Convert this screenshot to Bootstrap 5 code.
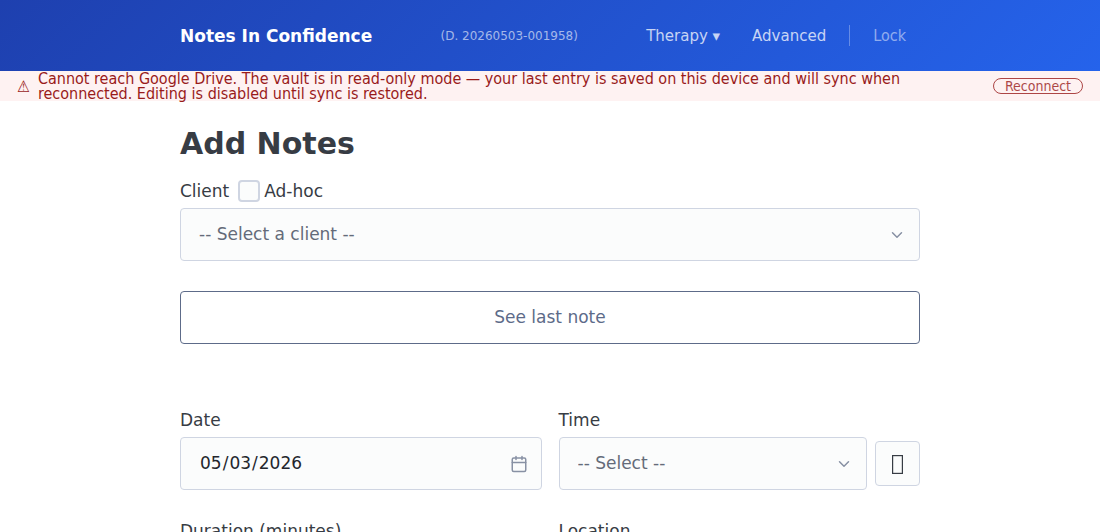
<!DOCTYPE html>
<html lang="en">
<head>
<meta charset="utf-8">
<meta name="viewport" content="width=device-width, initial-scale=1">
<title>Notes In Confidence</title>
<link href="https://cdn.jsdelivr.net/npm/bootstrap@5.3.0/dist/css/bootstrap.min.css" rel="stylesheet">
<style>
  :root { --line: #cfd5e2; --field: #fbfcfc; --ink: #373c44; --slate: #5d6b89; --narrow: "DejaVu Sans Condensed", "DejaVu Sans", sans-serif; }
  body { font-family: "DejaVu Sans", sans-serif; font-size: 17px; line-height: 26px; color: var(--ink); }
  .page-width { max-width: 740px; }
  .topbar { background: linear-gradient(135deg, #1e40af 0%, #2563eb 100%); height: 71px; }
  .topbar a { text-decoration: none; }
  .brand { color: #fff; font-weight: 700; }
  .build { color: rgba(255,255,255,.6); font-size: 12px; }
  .menu { gap: 32px; margin-right: 14px; }
  .menu a { color: rgba(255,255,255,.75); font-size: 15px; }
  .menu .lock-link { color: rgba(255,255,255,.5); font-family: var(--narrow); font-size: 16px; }
  .menu .rule { width: 1px; height: 21px; background: rgba(255,255,255,.3); margin: 0 -9px; }
  .sync-alert { background: #fef2f2; color: #991b1b; font-family: var(--narrow); font-size: 16px; line-height: 15px; padding: 0 17px; }
  .sync-alert p { padding-right: 60px; }
  .reconnect { font-size: 14px; line-height: 14px; padding: 0 11px; color: #991b1b; border: 1px solid #991b1b; border-radius: 8px; background: none; opacity: .8; flex: none; }
  h1 { font-size: 30px; line-height: 37px; font-weight: 700; }
  .form-control, .form-select { height: 53px; padding: 0 18px; font-size: 17px; border: 1px solid var(--line); border-radius: 4px; background-color: var(--field); }
  .form-select { color: #646b79; background-image: url("data:image/svg+xml,%3Csvg xmlns='http://www.w3.org/2000/svg' viewBox='0 0 24 24' fill='none' stroke='%238891a4' stroke-width='2' stroke-linecap='round' stroke-linejoin='round'%3E%3Cpath d='m6 9 6 6 6-6'/%3E%3C/svg%3E"); background-size: 18px; background-position: right 13px center; }
  .form-control { color: #23262c; }
  .form-control::-webkit-datetime-edit-month-field,
  .form-control::-webkit-datetime-edit-day-field,
  .form-control::-webkit-datetime-edit-year-field { padding: 0 1px; }
  .form-control::-webkit-calendar-picker-indicator { width: 18px; height: 18px; padding: 0; margin: 0 -5px 0 0; background: url("data:image/svg+xml,%3Csvg xmlns='http://www.w3.org/2000/svg' viewBox='0 0 24 24' fill='none' stroke='%238891a4' stroke-width='2' stroke-linecap='round' stroke-linejoin='round'%3E%3Crect x='3' y='4' width='18' height='18' rx='2'/%3E%3Cpath d='M16 2v4M8 2v4M3 10h18'/%3E%3C/svg%3E") center / 18px no-repeat; opacity: 1; }
  .form-check-input.adhoc { width: 22px; height: 22px; margin: 0 4px 0 9px; border: 2px solid var(--line); border-radius: 4px; background-color: var(--field); }
  .last-note { height: 53px; border: 1px solid var(--slate); border-radius: 4px; color: var(--slate); font-size: 17px; margin: 30px 0 63px; }
  .now-btn { width: 45px; height: 45px; border: 1px solid var(--line); border-radius: 4px; background: var(--field); color: var(--ink); padding: 0; flex: none; font-size: 17px; }
  .field-grid { --bs-gutter-x: 17px; --bs-gutter-y: 28px; }
  .field-grid label { margin-bottom: 4px; }
</style>
</head>
<body>
<header class="topbar d-flex align-items-center">
  <nav class="container-fluid page-width p-0 d-flex align-items-center justify-content-between">
    <a class="brand" href="#">Notes In Confidence</a>
    <span class="build">(D. 20260503-001958)</span>
    <div class="menu d-flex align-items-center">
      <a href="#">Therapy ▾</a>
      <a href="#">Advanced</a>
      <span class="rule"></span>
      <a class="lock-link" href="#">Lock</a>
    </div>
  </nav>
</header>
<div class="sync-alert d-flex align-items-center" role="alert">
  <span class="me-2">⚠</span>
  <p class="flex-grow-1 mb-0">Cannot reach Google Drive. The vault is in read-only mode — your last entry is saved on this device and will sync when reconnected. Editing is disabled until sync is restored.</p>
  <button type="button" class="reconnect">Reconnect</button>
</div>
<main class="container-fluid page-width px-0 pt-4">
  <h1 class="mb-3">Add Notes</h1>
  <form>
    <div class="d-flex align-items-center mb-1">
      <label for="client">Client</label>
      <input class="form-check-input adhoc" type="checkbox" id="adhoc">
      <label for="adhoc">Ad-hoc</label>
    </div>
    <select class="form-select" id="client"><option>-- Select a client --</option></select>
    <button type="button" class="btn last-note w-100">See last note</button>
    <div class="row field-grid">
      <div class="col-6">
        <label class="d-block" for="date">Date</label>
        <input class="form-control" type="date" id="date" value="2026-05-03">
      </div>
      <div class="col-6">
        <label class="d-block" for="time">Time</label>
        <div class="d-flex align-items-center gap-2">
          <select class="form-select" id="time"><option>-- Select --</option></select>
          <button type="button" class="now-btn" aria-label="Use current time"><svg width="11" height="19" viewBox="0 0 11 19" fill="none" stroke="currentColor"><rect x=".6" y=".6" width="9.8" height="17.8" stroke-width="1.2"/></svg></button>
        </div>
      </div>
      <div class="col-6">
        <label class="d-block" for="duration">Duration (minutes)</label>
        <input class="form-control" type="number" id="duration" value="50">
      </div>
      <div class="col-6">
        <label class="d-block" for="location">Location</label>
        <select class="form-select" id="location"><option>-- Select --</option></select>
      </div>
    </div>
  </form>
</main>
<script src="https://cdn.jsdelivr.net/npm/bootstrap@5.3.0/dist/js/bootstrap.bundle.min.js"></script>
</body>
</html>
